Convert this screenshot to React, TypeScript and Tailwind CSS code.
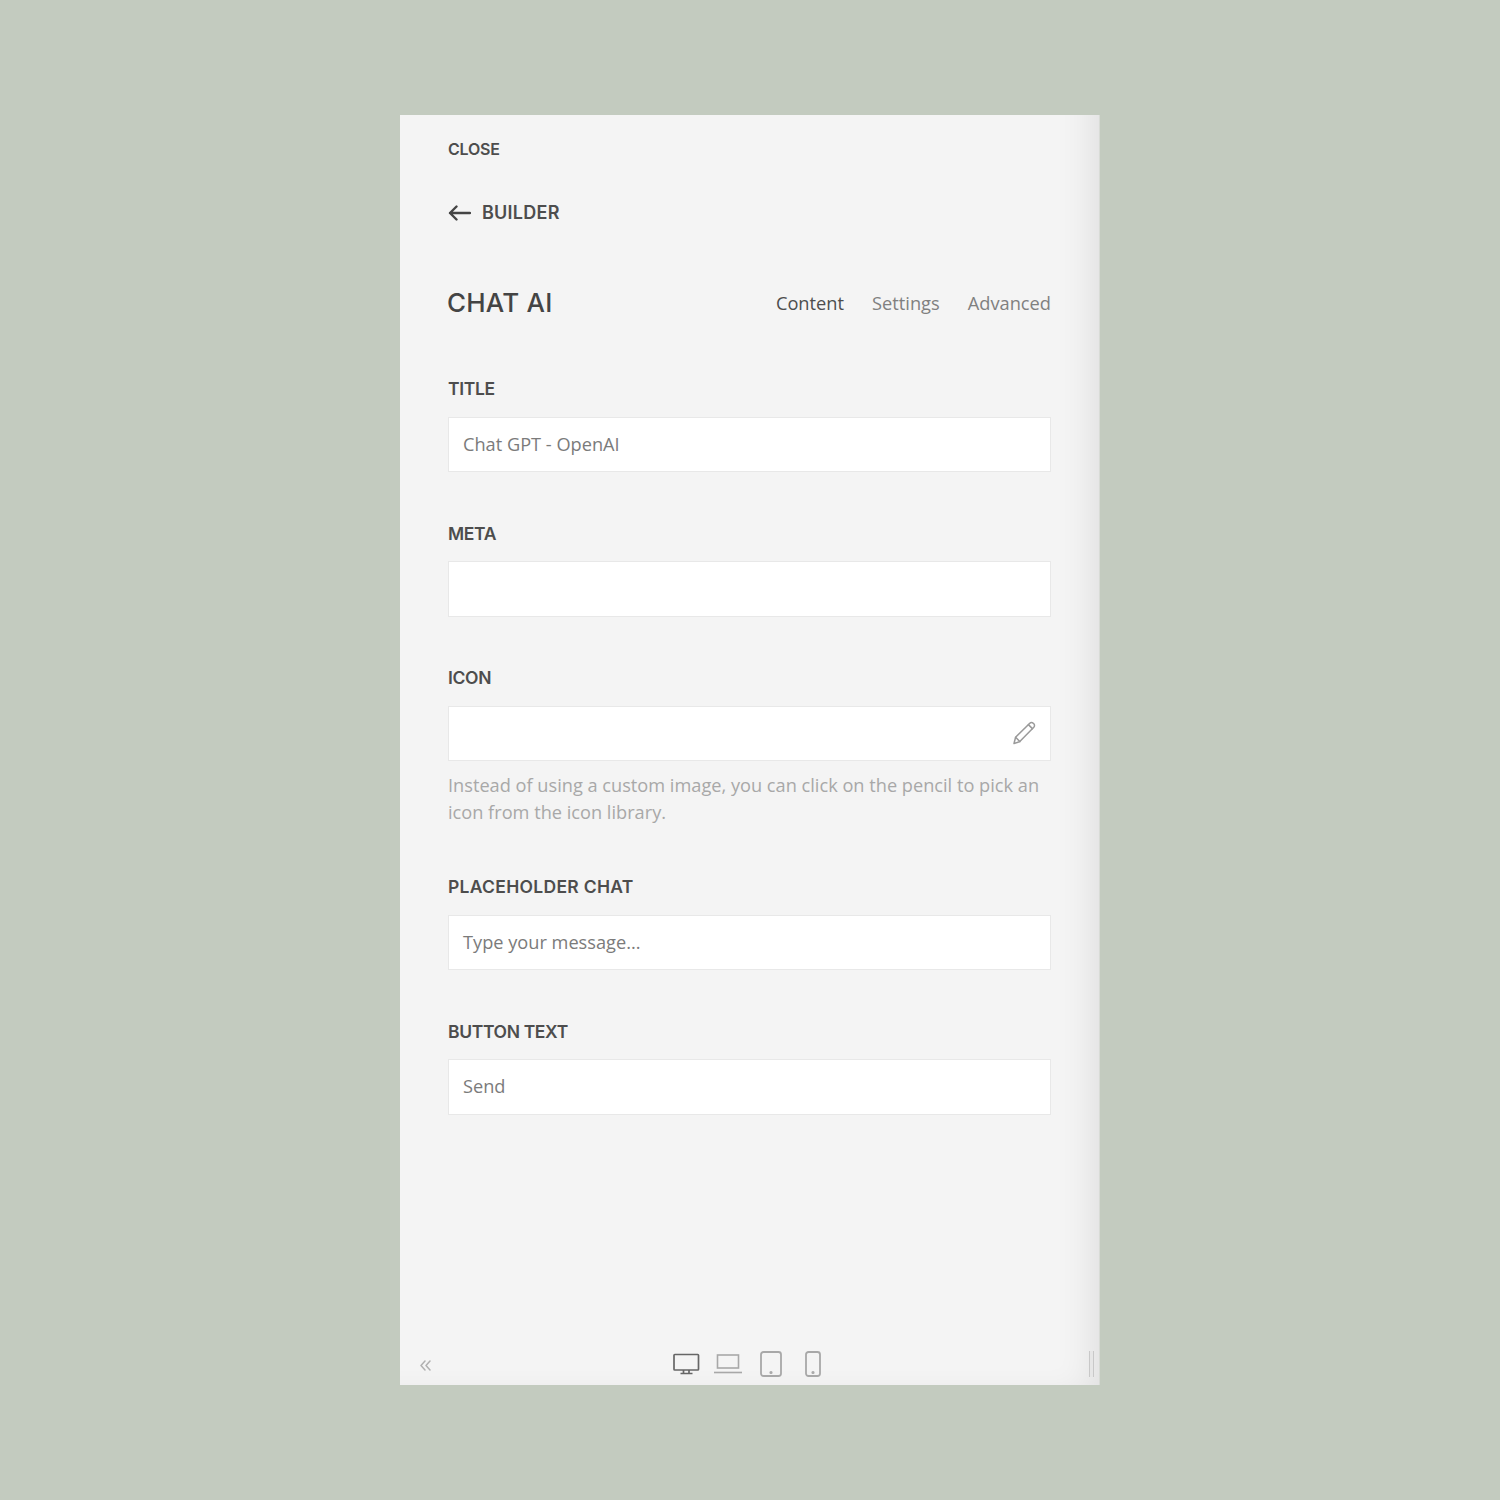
const HEADING = "font-['Inter','Liberation_Sans',sans-serif]";
const BODY = "font-['Open_Sans','Noto_Sans',sans-serif]";

function Field({ label, value, children, help, wide }: { label: string; value?: string; children?: React.ReactNode; help?: string; wide?: boolean }) {
  return (
    <div className="mb-[51.5px]">
      <label className={`block h-5 text-[17.5px] leading-5 font-semibold text-[#4d4d4d] ${wide ? "tracking-[0.3px]" : "tracking-[-0.35px]"} ${HEADING}`}>
        {label}
      </label>
      <div className="mt-[17.5px] flex h-[55.5px] items-center justify-between border border-[#e8e8e8] bg-white px-[14px]">
        <span className={`text-[18.2px] text-[#7b7b7b] ${BODY}`}>{value}</span>
        {children}
      </div>
      {help && <p className={`mt-[10.5px] text-[18.2px] leading-[27px] text-[#a8a8a8] ${BODY}`}>{help}</p>}
    </div>
  );
}

function Pencil() {
  return (
    <svg width="24" height="24" viewBox="0 0 24 24" fill="none" stroke="#9a9a9a" strokeWidth="1.5" strokeLinejoin="round" strokeLinecap="round">
      <path d="M2 22.5l1.6-6.2L17.8 2.2a2.4 2.4 0 0 1 3.4 0l.6.6a2.4 2.4 0 0 1 0 3.4L7.8 20.6 2 22.5z" />
      <path d="M3.6 16.3l4.2 4.3" />
      <path d="M16.4 3.6l4 4" />
    </svg>
  );
}

function DeviceIcons() {
  return (
    <div className="flex items-center gap-[15px]">
      <svg width="27" height="22" viewBox="0 0 27 22" fill="none" stroke="#666" strokeWidth="1.7">
        <rect x="1" y="1.5" width="24.5" height="15.5" rx="0.8" />
        <path d="M10.5 17v3M16 17v3M7.5 20.5h12" />
      </svg>
      <svg className="-ml-[1px]" width="28" height="20" viewBox="0 0 28 20" fill="none" stroke="#a8a8a8" strokeWidth="1.6">
        <rect x="3.5" y="1" width="21" height="13" />
        <path d="M0 18.5h28" />
      </svg>
      <svg className="ml-[3px]" width="22" height="26" viewBox="0 0 22 26" fill="none" stroke="#a8a8a8" strokeWidth="1.8">
        <rect x="1" y="1" width="20" height="24" rx="2.5" />
        <circle cx="11" cy="21.5" r="0.7" fill="#a8a8a8" />
      </svg>
      <svg className="ml-[8px]" width="16" height="26" viewBox="0 0 16 26" fill="none" stroke="#a8a8a8" strokeWidth="1.8">
        <rect x="1" y="1" width="14" height="24" rx="2.5" />
        <circle cx="8" cy="21.5" r="0.7" fill="#a8a8a8" />
      </svg>
    </div>
  );
}

export default function App() {
  return (
    <div className="flex h-[1500px] items-center justify-center bg-[#c3cbbf]">
      <div className="flex h-[1270px] w-[700px] flex-col border-r border-[#d8dbd6] bg-[#f4f4f4] pl-[48px] pr-[48px] shadow-[inset_-34px_-14px_34px_-28px_rgba(0,0,0,0.09)]">
        <div className={`mt-6 h-5 text-[16px] leading-5 font-semibold tracking-[-0.2px] text-[#4d4d4d] ${HEADING}`}>CLOSE</div>

        <div className="mt-[44px] flex h-5 items-center gap-[11px]">
          <svg width="23" height="16" viewBox="0 0 23 16" fill="none" stroke="#444" strokeWidth="2.4" strokeLinecap="round" strokeLinejoin="round">
            <path d="M22 8H2M8.5 1.5L2 8l6.5 6.5" />
          </svg>
          <span className={`text-[18px] leading-5 font-semibold tracking-[0.25px] text-[#4d4d4d] ${HEADING}`}>BUILDER</span>
        </div>

        <div className="mt-[69px] flex h-5 items-center justify-between">
          <h1 className={`-ml-[1px] text-[26px] font-medium tracking-[0.2px] text-[#444] ${HEADING}`}>CHAT AI</h1>
          <nav className={`flex gap-[28px] pt-[1px] text-[18.25px] text-[#808080] ${BODY}`}>
            <span className="text-[#4d4d4d]">Content</span>
            <span>Settings</span>
            <span>Advanced</span>
          </nav>
        </div>

        <div className="mt-[67px]">
          <Field label="TITLE" value="Chat GPT - OpenAI" />
          <Field label="META" />
          <Field label="ICON" help="Instead of using a custom image, you can click on the pencil to pick an icon from the icon library.">
            <Pencil />
          </Field>
          <Field label="PLACEHOLDER CHAT" value="Type your message..." wide />
          <Field label="BUTTON TEXT" value="Send" />
        </div>

        <div className="relative mt-auto -mx-[48px] mb-[6px] flex h-[30px] items-center justify-center">
          <svg className="absolute left-[20px] top-[11px]" width="11" height="11" viewBox="0 0 11 11" fill="none" stroke="#b0b0b0" strokeWidth="1.5" strokeLinecap="round" strokeLinejoin="round">
            <path d="M5 1L1 5.5 5 10M10 1L6 5.5l4 4.5" />
          </svg>
          <div className="-translate-x-[3px]"><DeviceIcons /></div>
          <div className="absolute right-[5px] top-[2px] h-[26px] w-[5px] border-x border-[#c8c8c8] bg-[#e6e6e6]" />
        </div>
      </div>
    </div>
  );
}
